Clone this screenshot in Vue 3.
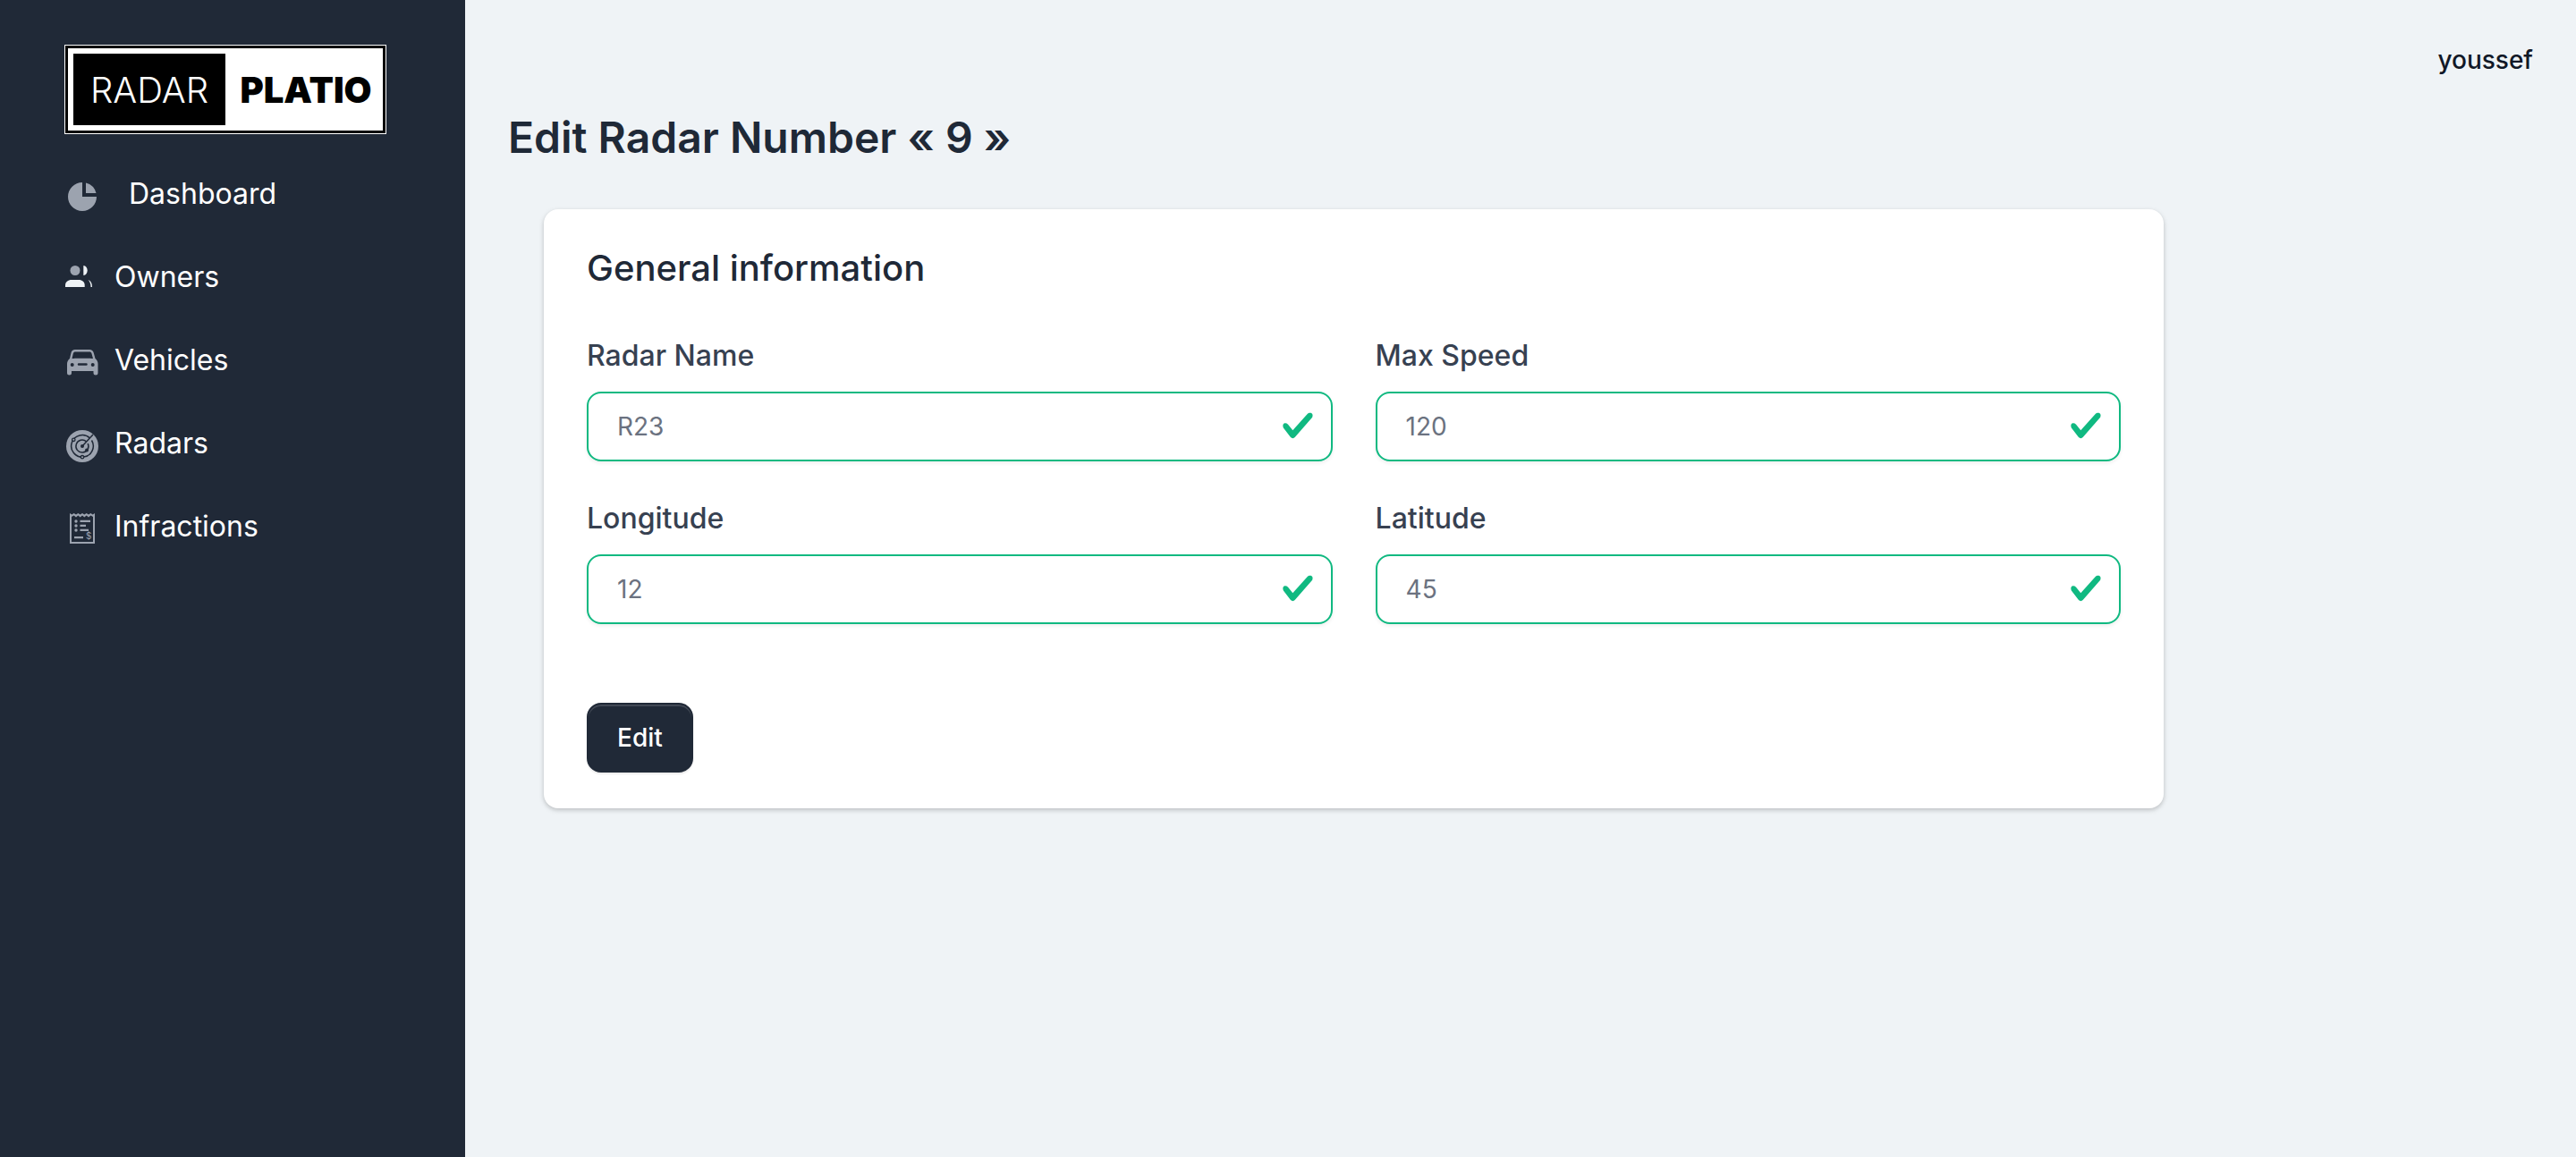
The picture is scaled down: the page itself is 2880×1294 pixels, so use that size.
<script setup>
import { ref } from 'vue'

const fields = ref([
  { id: 'name', label: 'Radar Name', placeholder: 'R23' },
  { id: 'speed', label: 'Max Speed', placeholder: '120' },
  { id: 'longitude', label: 'Longitude', placeholder: '12' },
  { id: 'latitude', label: 'Latitude', placeholder: '45' },
])
</script>

<template>
  <div class="layout">
    <aside class="sidebar">
      <a href="#" class="logo">
        <span class="logo-first">RADAR</span>
        <span class="logo-second">PLATIO</span>
      </a>
      <nav>
        <a href="#" class="nav-link nav-link-wide">
          <svg class="nav-icon" viewBox="0 0 40 40" aria-hidden="true">
            <path d="M20 7A16 16 0 1 0 36 23H20Z" />
            <path d="M24 7.5A16 16 0 0 1 35.5 19H24Z" />
          </svg>
          <span>Dashboard</span>
        </a>
        <a href="#" class="nav-link">
          <svg class="nav-icon" viewBox="0 0 40 40" aria-hidden="true">
            <circle cx="12" cy="12.5" r="5.5" />
            <g class="light">
              <path d="M1 31V29C1 25.500 4 23 8 23H16C20 23 22.700 25.500 22.700 29V31Z" />
              <path d="M21.300 7C24 7.300 25.700 9.500 25.700 12.500S24 17.700 21.300 18Z" />
              <path d="M26.500 23C29.500 24 31 26.500 31 31H29.500C29.500 27.500 28.500 25 26.500 23Z" />
            </g>
          </svg>
          <span>Owners</span>
        </a>
        <a href="#" class="nav-link">
          <svg class="nav-icon" viewBox="0 0 40 40" aria-hidden="true">
            <path
              fill-rule="evenodd"
              d="M12 8H28C30.500 8 32 9.200 32.700 11.500L34.500 18C36.500 19.500 37.500 21.500 37.500 24V34A2.300 2.300 0 0 1 32.500 34V32H8V34A2.300 2.300 0 0 1 3 34V24C3 21.500 4 19.500 6 18L7.500 11.500C8 9.200 9.500 8 12 8ZM12.500 10.500C11 10.500 10.200 11 9.800 12.500L8.500 18C12 17.600 28.500 17.600 32 18L30.500 12.500C30 11 29.300 10.500 28 10.500ZM8.700 23A2 2 0 1 0 8.700 27A2 2 0 1 0 8.700 23ZM31.700 23A2 2 0 1 0 31.700 27A2 2 0 1 0 31.700 23ZM16 23.200A1.200 1.200 0 0 0 16 25.700H24.500A1.200 1.200 0 0 0 24.500 23.200Z"
            />
          </svg>
          <span>Vehicles</span>
        </a>
        <a href="#" class="nav-link">
          <svg class="nav-icon" viewBox="0 0 40 40" aria-hidden="true">
            <circle cx="20" cy="23" r="18" />
            <g class="cut">
              <path d="M28.500 14A12.300 12.300 0 1 0 30.500 16.500" />
              <path d="M24.500 17.800A7 7 0 1 0 26.200 20" />
              <path d="M20 23L32 10" />
            </g>
            <circle cx="20" cy="23" r="2" class="spot" />
            <circle cx="10.300" cy="15.800" r="1.700" class="blip" />
            <circle cx="20" cy="35.200" r="1.700" class="blip" />
            <circle cx="25" cy="27.500" r="2" class="spot" />
          </svg>
          <span>Radars</span>
        </a>
        <a href="#" class="nav-link">
          <svg class="nav-icon" viewBox="0 0 40 40" aria-hidden="true">
            <path
              fill-rule="evenodd"
              d="M6 5L8.300 6.500L10.600 5L13 6.500L15.300 5L17.700 6.500L20 5L22.300 6.500L24.700 5L27 6.500L29.400 5L31.700 6.500L34 5V39H6ZM8 9V37H32V9L29.400 7.500L27 9.500L24.700 7.500L22.300 9.500L20 7.500L17.700 9.500L15.300 7.500L13 9.500L10.600 7.500Z"
            />
            <circle cx="13" cy="14" r="1.700" />
            <circle cx="13" cy="19" r="1.700" />
            <circle cx="13" cy="24" r="1.700" />
            <path d="M17.500 12.800H29V15H17.500ZM17.500 17.800H24V20H17.500ZM17.500 22.800H27V25H17.500ZM11 31H21V33.200H11Z" />
            <text x="24" y="34" class="currency">$</text>
          </svg>
          <span>Infractions</span>
        </a>
      </nav>
    </aside>

    <main class="content">
      <header class="topbar"><a href="#" class="user">youssef</a></header>
      <h1>Edit Radar Number « 9 »</h1>
      <form class="card" @submit.prevent>
        <h2>General information</h2>
        <div class="fields">
          <div v-for="field in fields" :key="field.id" class="field">
            <label :for="field.id">{{ field.label }}</label>
            <div class="control">
              <input :id="field.id" type="text" :placeholder="field.placeholder" />
              <svg class="check" viewBox="0 0 8 8" aria-hidden="true">
                <path d="M2.300 6.730L.6 4.530c-.4-1.040.46-1.400 1.100-.8l1.100 1.400 3.400-3.800c.6-.63 1.600-.27 1.200.7l-4 4.600c-.43.5-.8.4-1.100.1z" />
              </svg>
            </div>
          </div>
        </div>
        <button type="submit">Edit</button>
      </form>
    </main>
  </div>
</template>

<style>
body {
  margin: 0;
  background: #eff3f6;
}
</style>

<style scoped>
.layout {
  display: flex;
  min-height: 100vh;
  font-family: Inter, "Liberation Sans", sans-serif;
  color: #1f2937;
}

.layout * {
  box-sizing: border-box;
}

a {
  color: inherit;
  text-decoration: none;
}

.sidebar {
  flex: 0 0 520px;
  padding: 50px 72px;
  background: #202937;
  color: #fff;
}

.logo {
  display: flex;
  width: 360px;
  height: 100px;
  margin-bottom: 20px;
  padding: 9px;
  border: 1px solid #fff;
  background: #fff;
  box-shadow: inset 0 0 0 3px #000;
  color: #000;
  font-size: 40px;
}

.logo span {
  display: flex;
  align-items: center;
  justify-content: center;
}

.logo-first {
  flex: 0 0 170px;
  background: #000;
  color: #fff;
  font-weight: 300;
}

.logo-second {
  flex: 1;
  padding-left: 10px;
  font-weight: 900;
}

.nav-link {
  display: flex;
  align-items: center;
  gap: 16px;
  height: 93px;
  font-size: 32px;
  line-height: 48px;
}

.nav-link-wide {
  gap: 32px;
}

.nav-icon {
  flex: none;
  width: 40px;
  height: 40px;
  overflow: visible;
  fill: #9ca3af;
}

.light {
  fill: #eff3f6;
}

.cut {
  fill: none;
  stroke: #202937;
  stroke-width: 1.5;
}

.blip {
  stroke: #202937;
  stroke-width: 1.3;
}

.spot {
  fill: #202937;
}

.currency {
  font-size: 10px;
}

.content {
  flex: 1;
  padding: 46px 48px;
}

.topbar {
  display: flex;
  justify-content: flex-end;
}

.user {
  color: #111827;
  font-size: 28px;
  font-weight: 500;
  line-height: 42px;
}

h1 {
  margin: 36px 0 50px;
  font-size: 48px;
  font-weight: 600;
  line-height: 60px;
}

.card {
  width: 80%;
  margin-left: 40px;
  padding: 40px 48px;
  border-radius: 16px;
  background: #fff;
  box-shadow: 0 2px 6px rgba(0, 0, 0, 0.12), 0 2px 4px rgba(0, 0, 0, 0.1);
}

h2 {
  margin: 0 0 48px;
  font-size: 40px;
  font-weight: 500;
  line-height: 52px;
}

.fields {
  display: grid;
  grid-template-columns: 1fr 1fr;
  gap: 40px 48px;
  margin-bottom: 88px;
}

label {
  display: block;
  margin-bottom: 16px;
  color: #374151;
  font-size: 32px;
  font-weight: 500;
  line-height: 48px;
}

.control {
  position: relative;
}

input {
  display: block;
  width: 100%;
  height: 78px;
  padding: 0 80px 0 32px;
  border: 2px solid #10b981;
  border-radius: 16px;
  background: #fff;
  box-shadow: 0 2px 4px rgba(0, 0, 0, 0.07);
  color: #6b7280;
  font: inherit;
  font-size: 28px;
}

input::placeholder {
  color: #6b7280;
  opacity: 1;
}

.check {
  position: absolute;
  top: 19px;
  right: 20px;
  width: 38px;
  height: 38px;
  fill: #10b981;
  pointer-events: none;
}

button {
  display: block;
  height: 78px;
  padding: 0 32px;
  border: 2px solid #202937;
  border-radius: 16px;
  background: #202937;
  box-shadow: inset 0 2px 0 rgba(255, 255, 255, 0.15), 0 2px 2px rgba(0, 0, 0, 0.08);
  color: #fff;
  font: inherit;
  font-size: 28px;
  font-weight: 500;
}
</style>
